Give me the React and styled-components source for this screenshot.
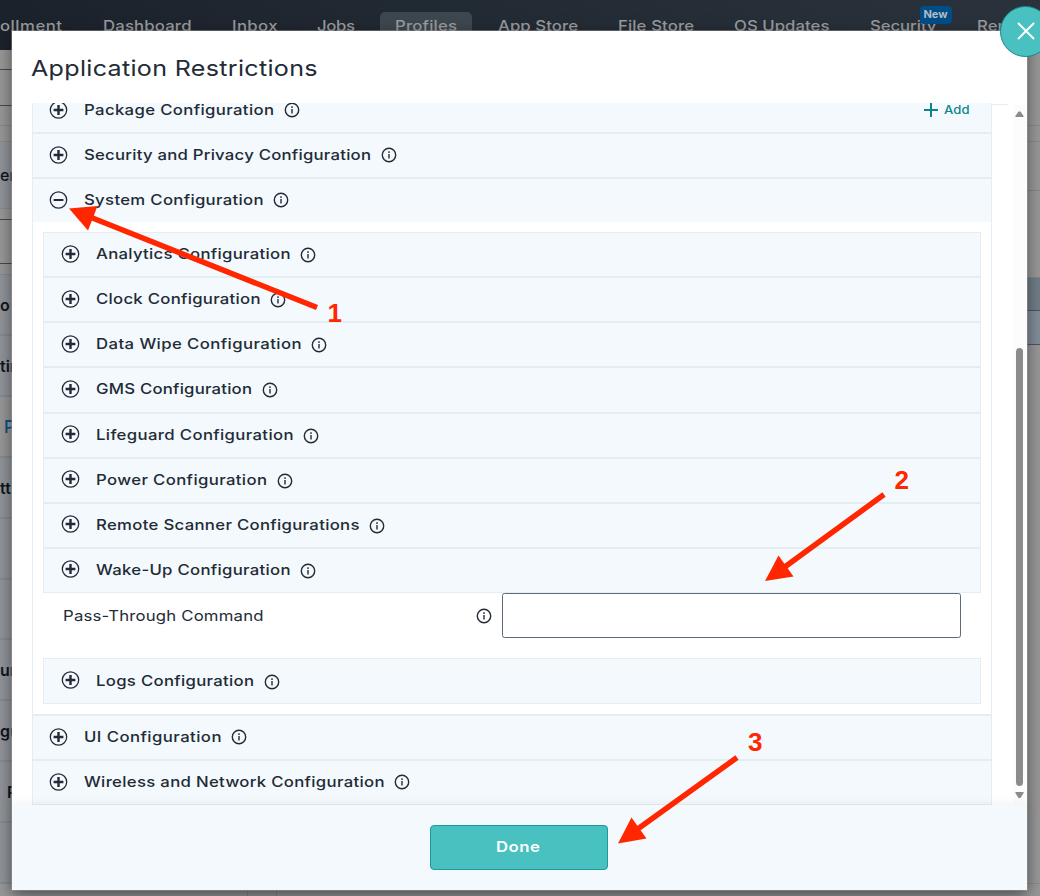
import React, { useLayoutEffect, useRef, useState } from "react";
import styled, { createGlobalStyle } from "styled-components";

const Global = createGlobalStyle`
  *, *::before, *::after { box-sizing: border-box; }
  html, body { margin: 0; padding: 0; }
  body { font-family: Inter, "Open Sans", sans-serif; color: #222b36; overflow: hidden; }
`;

const STRETCH = 1.14;

const LabelBox = styled.span`
  display: block;
  flex: none;
  white-space: nowrap;
  overflow: visible;
  font-size: ${(p) => p.$size || 14.7}px;
  font-weight: ${(p) => p.$weight || 500};
  line-height: 20px;
  color: ${(p) => p.$color || "inherit"};
`;

const LabelText = styled.span`
  display: inline-block;
  transform: scaleX(${STRETCH});
  transform-origin: left center;
`;

/* A wide label whose tracking is adjusted so that it fills the given width. */
function Label({ width, size, weight, color, children }) {
  const ref = useRef(null);
  const [spacing, setSpacing] = useState(0);
  useLayoutEffect(() => {
    const natural = ref.current.getBoundingClientRect().width / STRETCH - spacing * children.length;
    setSpacing(((width + 1) / STRETCH - natural) / Math.max(1, children.length - 1));
  }, [width, children]);
  return (
    <LabelBox $size={size} $weight={weight} $color={color} style={{ width }}>
      <LabelText ref={ref} style={{ letterSpacing: spacing }}>{children}</LabelText>
    </LabelBox>
  );
}

const Screen = styled.div`
  position: relative;
  width: 1040px;
  height: 896px;
  overflow: hidden;
  background: #989898;
  display: flex;
  flex-direction: column;
`;

const TopNav = styled.nav`
  flex: none;
  height: 50px;
  display: flex;
  align-items: flex-start;
  padding-top: 12px;
  background: linear-gradient(100deg, #1c222b 0%, #222a34 45%, #2a323b 100%);
`;

const NavItem = styled.div`
  position: relative;
  left: -0.5px;
  flex: none;
  height: 38px;
  margin-right: ${(p) => p.$gap}px;
  padding: 4px ${(p) => (p.$active ? 15.5 : 0)}px 0;
  border-radius: 5px;
  background: ${(p) => (p.$active ? "#3d474f" : "transparent")};
`;

const Badge = styled.span`
  position: absolute;
  left: 50px;
  top: -6px;
  width: 32px;
  height: 18px;
  padding-bottom: 2px;
  border-radius: 4px;
  background: #004d87;
  color: #b4bcc2;
  display: flex;
  justify-content: center;
  align-items: center;
  font-size: 11px;
  font-weight: 700;
`;

const PageBelow = styled.div`
  flex: 1;
  display: flex;
  justify-content: space-between;
`;

const Column = styled.div`
  width: ${(p) => p.$width}px;
  display: flex;
  flex-direction: column;
`;

const Divider = styled.div`
  width: 30px;
  margin: 0 auto 0 235px;
  border: solid #858585;
  border-width: 0 1px;
`;

const Band = styled.div`
  flex: none;
  height: ${(p) => p.$height}px;
  background: ${(p) => p.$bg || "transparent"};
  border-bottom: ${(p) => p.$thick || 1}px solid ${(p) => p.$line || "#868b90"};
  display: flex;
  align-items: center;
  justify-content: ${(p) => (p.$end ? "flex-end" : "flex-start")};
  overflow: hidden;
  white-space: nowrap;
  padding-left: ${(p) => p.$indent || 0}px;
  font-size: ${(p) => p.$size || 16}px;
  font-weight: ${(p) => p.$weight || 600};
  color: ${(p) => p.$color || "#10151c"};
`;

const Modal = styled.section`
  position: absolute;
  left: 12px;
  top: 31px;
  width: 1015px;
  height: 859px;
  background: #fff;
  box-shadow: 0 0 0 1px rgba(160, 160, 160, 0.45), 0 5px 15px rgba(0, 0, 0, 0.5);
  display: flex;
  flex-direction: column;
`;

const CloseButton = styled.button`
  position: absolute;
  left: 1000px;
  top: 6px;
  width: 51px;
  height: 51px;
  border-radius: 50%;
  border: 1px solid #16878c;
  background: #48c1c0;
  padding: 0 0 1px 0;
  display: flex;
  align-items: center;
  justify-content: center;
`;

const ModalHeader = styled.header`
  flex: none;
  height: 72px;
  padding: 27px 19px 0;
`;

const ModalBody = styled.div`
  flex: none;
  height: 702px;
  display: flex;
  overflow: hidden;
`;

const ScrollArea = styled.div`
  flex: 1;
  display: flex;
  padding-left: 20px;
  overflow: hidden;
`;

const Panel = styled.div`
  width: 960px;
  margin-top: -15px;
  border: solid #e4edf4;
  border-width: 0 1px;
`;

const PanelEdge = styled.div`
  width: 16px;
  height: 1px;
  margin-top: 1px;
  background: #e4edf4;
`;

const Row = styled.div`
  height: ${(p) => p.$height || 45.125}px;
  display: flex;
  align-items: center;
  padding: ${(p) => (p.$nested ? "0 20px 1px 16.5px" : "0 22.5px 1px 15.5px")};
  background: #f3f9fd;
  border: solid #e4edf2;
  border-width: 1px ${(p) => (p.$nested ? 1 : 0)}px ${(p) => (p.$open ? 0 : 1)}px;
`;

const RowLabel = styled.div`
  display: flex;
  align-items: center;
  gap: 10.8px;
  margin-left: ${(p) => (p.$nested ? 16.5 : 16.3)}px;
`;

const InfoIcon = styled.svg`
  flex: none;
  margin-top: ${(p) => p.$drop || 0}px;
`;

const AddButton = styled.div`
  margin-left: auto;
  display: flex;
  align-items: center;
  gap: 6px;
  color: #0b868b;
`;

const Nested = styled.div`
  padding: 10px 10px 0;
`;

const FieldRow = styled.div`
  height: 65px;
  display: flex;
  align-items: flex-start;
  padding: 0 20px 0 19.5px;
`;

const FieldLabel = styled.div`
  width: 439.5px;
  height: 45px;
  display: flex;
  align-items: center;
  justify-content: space-between;
  padding-right: 10.5px;
`;

const TextInput = styled.input`
  width: 459px;
  height: 45px;
  border: 1px solid #5d6a78;
  border-radius: 2.5px;
  background: #fff;
  outline: none;
`;

const Gap = styled.div`
  height: ${(p) => p.$height}px;
  border-bottom: 1px solid #e4edf2;
`;

const Scrollbar = styled.div`
  flex: none;
  width: 14px;
  margin-top: 2px;
  padding-right: 1px;
  background: #fcfcfc;
  display: flex;
  flex-direction: column;
  align-items: center;
`;

const Thumb = styled.div`
  width: 7px;
  height: 438px;
  margin-top: 230px;
  margin-bottom: 6px;
  border-radius: 4px;
  background: #8b8b8b;
`;

const ModalFooter = styled.footer`
  flex: 1;
  background: #f3f9fd;
  box-shadow: 0 -2px 8px rgba(50, 70, 90, 0.07);
  display: flex;
  justify-content: center;
  padding: 20px 1.5px 0 0;
`;

const DoneButton = styled.button`
  width: 178px;
  height: 45px;
  padding: 0 3px 2px 0;
  border: 1px solid #1b9aa0;
  border-radius: 4px;
  background: #48c1c0;
  font-family: inherit;
  text-align: left;
  display: flex;
  justify-content: center;
  align-items: center;
`;

const Annotations = styled.svg`
  position: absolute;
  left: 0;
  top: 0;
  pointer-events: none;
`;

const ToggleIcon = styled.svg`
  flex: none;
`;

function Toggle({ open }) {
  return (
    <ToggleIcon width="19" height="19" viewBox="0 0 19 19" fill="none" stroke="#222b36">
      <circle cx="9.5" cy="9" r="8.2" strokeWidth="1.3" />
      <path d={open ? "M4.6 9h9.8" : "M4.6 9h9.8M9.5 4.1v9.8"} strokeWidth={open ? 2 : 2.4} />
    </ToggleIcon>
  );
}

function Info({ drop }) {
  return (
    <InfoIcon $drop={drop} width="16" height="16" viewBox="0 0 16 16" fill="none" stroke="#222b36">
      <circle cx="8" cy="8" r="6.7" strokeWidth="1.4" />
      <path d="M8 7.1v4.4M8 4.3v1.6" strokeWidth="1.4" />
    </InfoIcon>
  );
}

function ConfigRow({ label, width, nested, open, height, add }) {
  return (
    <Row $nested={nested} $open={open} $height={height}>
      <Toggle open={open} />
      <RowLabel $nested={nested}>
        <Label width={width}>{label}</Label>
        <Info drop={nested ? 2 : 0.5} />
      </RowLabel>
      {add && (
        <AddButton>
          <svg width="14" height="14" viewBox="0 0 14 14" stroke="#0b868b" strokeWidth="2">
            <path d="M0 7h14M7 0v14" />
          </svg>
          <Label width={24.5} size={11.5}>Add</Label>
        </AddButton>
      )}
    </Row>
  );
}

const nestedRows = [
  ["Analytics Configuration", 193.5],
  ["Clock Configuration", 163.5],
  ["Data Wipe Configuration", 204.5],
  ["GMS Configuration", 155],
  ["Lifeguard Configuration", 196.5],
  ["Power Configuration", 170],
  ["Remote Scanner Configurations", 262.5],
  ["Wake-Up Configuration", 193.5],
];

const navItems = [
  ["ollment", 61, 42],
  ["Dashboard", 87.5, 41.5],
  ["Inbox", 44.5, 40.5],
  ["Jobs", 37, 26],
  ["Profiles", 61, 26],
  ["App Store", 79, 41.5],
  ["File Store", 75, 41],
  ["OS Updates", 94.5, 41],
  ["Security", 65.5, 41.5],
  ["Remote", 60, 0],
];

const ARROW = "#ff2600";

function Arrow({ from, to, head }) {
  return (
    <g fill={ARROW} stroke={ARROW}>
      <line x1={from[0]} y1={from[1]} x2={to[0]} y2={to[1]} strokeWidth="5.5" />
      <polygon points={head} stroke="none" />
    </g>
  );
}

const stripe = "#91959a";

export default function App() {
  return (
    <Screen>
      <Global />
      <TopNav>
        {navItems.map(([name, width, gap]) => (
          <NavItem key={name} $gap={gap} $active={name === "Profiles"}>
            <Label width={width} color="#999b9d">{name}</Label>
            {name === "Security" && <Badge>New</Badge>}
          </NavItem>
        ))}
      </TopNav>
      <PageBelow>
        <Column $width={12}>
          <Band $height={20} $line="#414a53" />
          <Band $height={36} $line="#414a53" />
          <Band $height={20} />
          <Band $height={16} />
          <Band $height={67} $bg={stripe} $weight={500}>en</Band>
          <Band $height={11} $line="#414a53" />
          <Band $height={44} $line="#414a53" />
          <Band $height={11} />
          <Band $height={61} $bg={stripe} $thick={2}>o</Band>
          <Band $height={61} $bg={stripe} $thick={2}>tin</Band>
          <Band $height={61} $thick={2} $indent={4} $weight={500} $color="#0a4f86" $size={17}>P</Band>
          <Band $height={61} $bg={stripe} $thick={2}>tt</Band>
          <Band $height={61} $bg={stripe} $thick={2} />
          <Band $height={60} $bg={stripe} $thick={2} />
          <Band $height={61} $bg={stripe} $thick={2}>ur</Band>
          <Band $height={61} $bg={stripe} $thick={2}>gu</Band>
          <Band $height={61} $bg={stripe} $thick={2} $indent={7} $size={16}>P</Band>
          <Band $height={61} $bg={stripe} $thick={2} />
        </Column>
        <Divider />
        <Column $width={13}>
          <Band $height={76} />
          <Band $height={16} />
          <Band $height={49} $line="#7d8791" />
          <Band $height={87} $line="#808890" />
          <Band $height={33} $bg="#717d86" $line="#4d565f" />
          <Band $height={34} $bg="#808d98" $line="#4d565f" />
          <Band $height={539} />
        </Column>
      </PageBelow>

      <Modal>
        <ModalHeader>
          <Label width={285.5} size={22} weight={400}>Application Restrictions</Label>
        </ModalHeader>
        <ModalBody>
          <ScrollArea>
            <Panel>
              <ConfigRow label="Package Configuration" width={189} add />
              <ConfigRow label="Security and Privacy Configuration" width={286} />
              <ConfigRow label="System Configuration" width={178.5} open height={43.75} />
              <Nested>
                {nestedRows.map(([label, width]) => (
                  <ConfigRow key={label} label={label} width={width} nested />
                ))}
                <FieldRow>
                  <FieldLabel>
                    <Label width={199.5} weight={400}>Pass-Through Command</Label>
                    <Info drop={1} />
                  </FieldLabel>
                  <TextInput />
                </FieldRow>
                <ConfigRow label="Logs Configuration" width={157} nested height={46} />
              </Nested>
              <Gap $height={11} />
              <ConfigRow label="UI Configuration" width={136.5} height={45} />
              <ConfigRow label="Wireless and Network Configuration" width={299.5} height={45} />
            </Panel>
            <PanelEdge />
          </ScrollArea>
          <Scrollbar>
            <svg width="9" height="13" viewBox="0 0 9 13"><path d="M.4 12V11L3.5 6.5h2L8.6 11v1z" fill="#8b8b8b" /></svg>
            <Thumb />
            <svg width="9" height="6" viewBox="0 0 9 6"><path d="M.4 0v1L3.5 6h2L8.6 1V0z" fill="#8b8b8b" /></svg>
          </Scrollbar>
        </ModalBody>
        <ModalFooter>
          <DoneButton>
            <Label width={43} weight={600} color="#fff">Done</Label>
          </DoneButton>
        </ModalFooter>
      </Modal>

      <CloseButton>
        <svg width="18" height="18" viewBox="0 0 18 18" stroke="#fff" strokeWidth="2">
          <path d="M1 1l16 16M17 1L1 17" />
        </svg>
      </CloseButton>

      <Annotations
        width="1040"
        height="896"
        fontFamily='"Liberation Sans", Arial, sans-serif'
        fontWeight="700"
        fontSize="26"
        fill={ARROW}
      >
        <Arrow from={[317, 307.5]} to={[90, 217]} head="69,208.5 97.5,206 88,230.5" />
        <Arrow from={[884, 494.5]} to={[784, 567.5]} head="765,581 778.5,555.5 793.5,576.5" />
        <Arrow from={[737, 757.5]} to={[637, 829.5]} head="618,843.5 631.5,817.5 646.5,838.5" />
        <text x="327.5" y="322">1</text>
        <text x="894.5" y="489">2</text>
        <text x="748" y="751">3</text>
      </Annotations>
    </Screen>
  );
}
